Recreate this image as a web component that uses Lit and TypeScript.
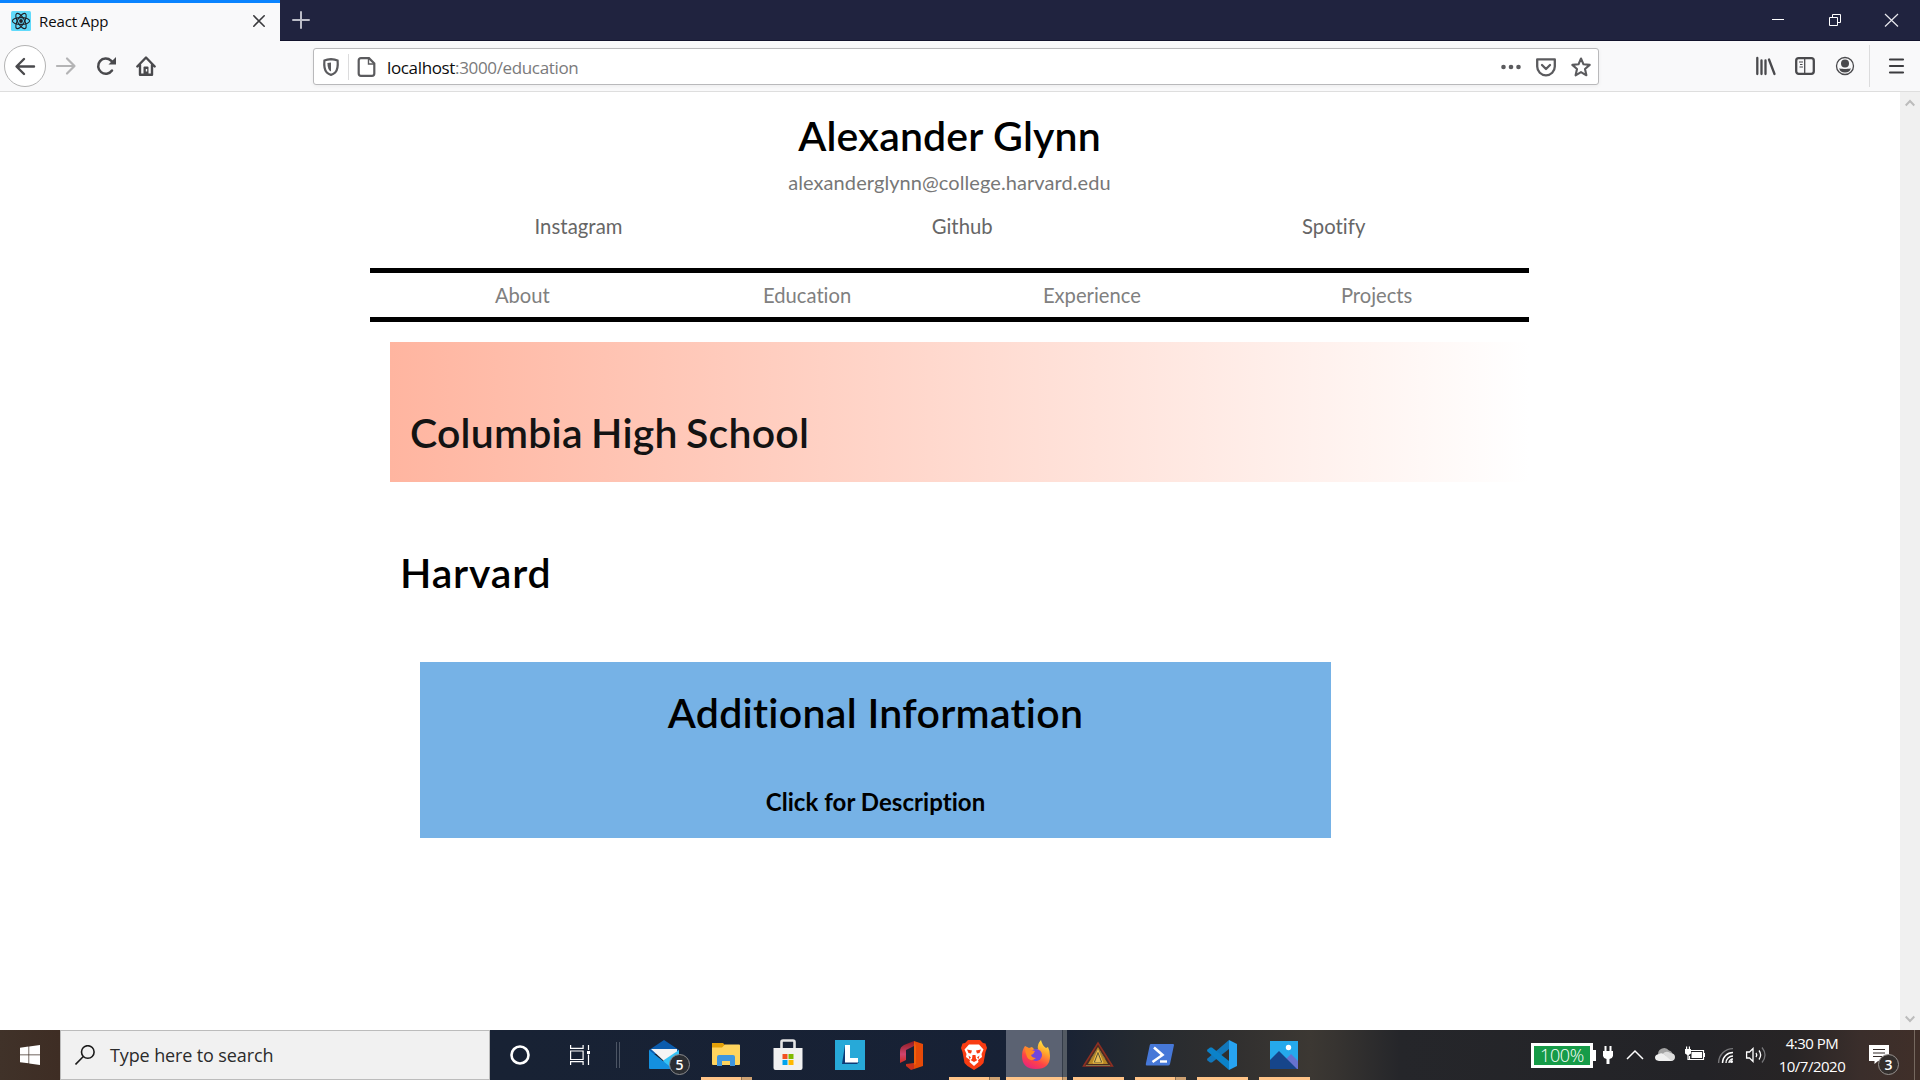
import { LitElement, html, css, svg, nothing } from "lit";
import { customElement, property } from "lit/decorators.js";

@customElement("browser-chrome")
class BrowserChrome extends LitElement {
  static styles = css`
    :host { display: block; font-family: "Open Sans", "Noto Sans", sans-serif; }
    * { box-sizing: border-box; }
    svg { display: block; flex: none; overflow: visible; }
    .tabs { display: flex; height: 41px; background: #20233f; border-bottom: 1px solid #12132c; }
    .tab { width: 280px; height: 41px; background: #f9f9fa; border-top: 3px solid #0a84ff; display: flex; align-items: center; padding: 0 15px 3px 11px; }
    .tab-title { font-size: 15px; letter-spacing: -0.1px; color: #0c0c0d; margin-left: 8px; flex: 1; line-height: 20px; }
    .plus { margin: 11px 0 0 12px; }
    .controls { margin-left: auto; display: flex; gap: 44px; padding: 14px 22px 0 0; }
    .close { margin-left: -1px; }
    .toolbar { height: 51px; background: #f9f9fa; border-bottom: 1px solid #dedede; display: flex; align-items: center; padding-right: 16px; }
    .back { width: 42px; height: 42px; border: 1px solid #b3b3b3; border-radius: 50%; background: #fff; display: flex; align-items: center; justify-content: center; margin-left: 4px; }
    .nav { display: flex; align-items: center; gap: 20px; margin-left: 10px; }
    .url { margin: 1px 0 0 157px; width: 1286px; height: 37px; border: 1px solid #b9b9bb; border-radius: 3px; background: #fff; box-shadow: 0 1px 4px rgba(0,0,0,.06); display: flex; align-items: center; padding: 0 7px 0 8px; }
    .url-sep { width: 1px; height: 26px; background: #dcdcdd; margin: 0 8px; }
    .address { font-size: 17px; line-height: 24px; letter-spacing: -0.35px; color: #0c0c0d; margin-left: 12px; flex: 1; padding-top: 2px; }
    .muted { color: #7a7a7b; }
    .actions { display: flex; gap: 15px; align-items: center; }
    .right { margin-left: auto; display: flex; align-items: center; gap: 20px; }
    .menu-sep { width: 1px; height: 42px; background: #dcdcdd; margin: 0 -1px 0 -6px; }
  `;
  render() {
    return html`
      <div class="tabs">
        <div class="tab">
          <svg width="20" height="20" viewBox="0 0 20 20"><rect width="20" height="20" rx="1.5" fill="#61dafb"/><g fill="none" stroke="#20232a" stroke-width="1.1"><ellipse cx="10" cy="10" rx="8.6" ry="3.4"/><ellipse cx="10" cy="10" rx="8.6" ry="3.4" transform="rotate(60 10 10)"/><ellipse cx="10" cy="10" rx="8.6" ry="3.4" transform="rotate(120 10 10)"/></g><circle cx="10" cy="10" r="1.9" fill="#20232a"/></svg>
          <span class="tab-title">React App</span>
          <svg width="12" height="12" viewBox="0 0 12 12"><path d="M.8.8l10.4 10.4M11.2.8L.8 11.2" stroke="#3a3a3d" stroke-width="1.6" stroke-linecap="round"/></svg>
        </div>
        <svg class="plus" width="18" height="18" viewBox="0 0 18 18"><path d="M9 1v16M1 9h16" stroke="#bcbdc8" stroke-width="2" stroke-linecap="round"/></svg>
        <div class="controls">
          <svg width="13" height="13" viewBox="0 0 13 13"><path d="M0 5.5h12" stroke="#fff"/></svg>
          <svg width="13" height="13" viewBox="0 0 13 13"><path d="M.5 3.5h8v8h-8zM3.5 3.5v-3h8v8h-3" fill="none" stroke="#fff"/></svg>
          <svg class="close" width="13" height="13" viewBox="0 0 13 13"><path d="M0 0l13 12.500M13 0L0 12.500" stroke="#e8e8ee" stroke-width="1.2"/></svg>
        </div>
      </div>
      <div class="toolbar">
        <div class="back"><svg width="20" height="20" viewBox="0 0 20 20"><path d="M19 10.500H2M9 3L1.500 10.500L9 18" fill="none" stroke="#4a4a4d" stroke-width="2.400" stroke-linecap="round" stroke-linejoin="round"/></svg></div>
        <div class="nav">
          <svg width="20" height="20" viewBox="0 0 20 20"><path d="M1 10h17M11 2.500l7.500 7.500-7.500 7.500" fill="none" stroke="#b4b4b5" stroke-width="2.200" stroke-linecap="round" stroke-linejoin="round"/></svg>
          <svg width="20" height="20" viewBox="0 0 20 20"><path d="M16 14.500A7.600 7.600 0 1 1 15 4.600L17 6.500" fill="none" stroke="#4a4a4d" stroke-width="2.500" stroke-linecap="round"/><path d="M20 1v7.500H12.500z" fill="#4a4a4d"/></svg>
          <svg width="20" height="20" viewBox="0 0 20 20"><path d="M1.300 10.500L10 1.500l8.700 9M4 9v9.700h12V9" fill="none" stroke="#4a4a4d" stroke-width="2.400" stroke-linecap="round" stroke-linejoin="round"/><path d="M7.500 19v-7.500q0-1 1-1h3q1 0 1 1V19z" fill="#4a4a4d"/><path d="M9.800 13h1.400v2.500H9.800z" fill="#f9f9fa"/></svg>
        </div>
        <div class="url">
          <svg width="18" height="18" viewBox="0 0 18 18"><path d="M9 1.200Q13 1.500 15.600 2.500q.8 8.800-2.400 12Q11.500 16.200 9 16.900Q6.500 16.200 4.800 14.500Q1.600 11.300 2.400 2.500Q5 1.500 9 1.200z" fill="none" stroke="#5b5b5e" stroke-width="2.200"/><path d="M9 4.400v9.200Q5.500 11.800 5.400 5z" fill="#5b5b5e"/></svg>
          <span class="url-sep"></span>
          <svg width="18" height="20" viewBox="0 0 18 20"><path d="M4 1.200H12L17.300 6.500V16.500q0 2.300-2.300 2.300h-11q-2.300 0-2.300-2.300v-13q0-2.300 2.300-2.300z" fill="none" stroke="#5b5b5e" stroke-width="2.200"/><path d="M11.500 1.500v5.500h5.500" fill="none" stroke="#5b5b5e" stroke-width="1.400"/></svg>
          <span class="address">localhost<span class="muted">:3000/education</span></span>
          <div class="actions">
            <svg width="20" height="20" viewBox="0 0 20 20" fill="#5b5b5e"><circle cx="2.500" cy="10" r="2.300"/><circle cx="10" cy="10" r="2.300"/><circle cx="17.500" cy="10" r="2.300"/></svg>
            <svg width="20" height="20" viewBox="0 0 20 20" fill="none" stroke="#5b5b5e" stroke-width="2.300" stroke-linecap="round" stroke-linejoin="round"><path d="M1.200 2.300h17.600v7.200a8.800 8.800 0 0 1-17.600 0z"/><path d="M6 8l4 4 4-4"/></svg>
            <svg width="20" height="20" viewBox="0 0 20 20"><path d="M10 1.500l2.500 5.800 6.200.6-4.700 4.100 1.400 6.300L10 15.100l-5.400 3.200L6 12 1.300 7.900l6.200-.6z" fill="none" stroke="#5b5b5e" stroke-width="2.100" stroke-linejoin="round"/></svg>
          </div>
        </div>
        <div class="right">
          <svg width="20" height="20" viewBox="0 0 20 20" fill="none" stroke="#4a4a4d" stroke-linecap="round"><path d="M2.300 2v16M6.500 4.500v13.500M10.500 4.500v13.500M14 3.500L19.500 18" stroke-width="2.300"/></svg>
          <svg width="20" height="20" viewBox="0 0 20 20" fill="none" stroke="#4a4a4d"><rect x="1.200" y="2.200" width="17.600" height="15.600" rx="2.500" stroke-width="2.300"/><path d="M9.700 2v16" stroke-width="1.300"/><path d="M4 6h4M5 8.500h2.500M4.500 11H8" stroke-width="1.100"/></svg>
          <svg width="20" height="20" viewBox="0 0 20 20"><circle cx="10" cy="10" r="8.500" fill="none" stroke="#4a4a4d" stroke-width="1.300"/><circle cx="10" cy="7.500" r="4" fill="#4a4a4d"/><path d="M4.200 12.200q2 .7 3.300.5 2.500.7 5 0 1.300.2 3.300-.5-.8 4.300-5.800 4.300t-5.800-4.300z" fill="#4a4a4d"/></svg>
          <span class="menu-sep"></span>
          <svg width="15" height="20" viewBox="0 0 15 20"><path d="M1 3.500h13M1 10h13M1 16.500h13" stroke="#3c3c3f" stroke-width="2.200" stroke-linecap="round"/></svg>
        </div>
      </div>`;
  }
}

@customElement("portfolio-page")
class PortfolioPage extends LitElement {
  static styles = css`
    :host { display: flex; flex: 1; min-height: 0; background: #fff; font-family: Lato, sans-serif; font-variant-ligatures: none; }
    * { box-sizing: border-box; }
    h1, h2, h3, p { margin: 0; }
    .view { flex: 1; display: flex; justify-content: center; padding-right: 1px; }
    .content { width: 1159px; }
    h1, h2 { font-size: 41px; font-weight: 600; line-height: 48px; color: #000; letter-spacing: 0.3px; }
    h1 { text-align: center; margin-top: 20px; letter-spacing: 0.15px; }
    .email { text-align: center; font-size: 20px; line-height: 24px; letter-spacing: 0.08px; margin-top: 10px; color: #777; }
    .social { display: flex; justify-content: space-around; padding: 0 9px 0 10px; margin-top: 20px; font-size: 20.300px; line-height: 24px; letter-spacing: 0.05px; color: #666; }
    .pages { display: grid; grid-template-columns: repeat(4, 1fr); padding: 0 10px; margin-top: 30px; height: 54px; border: solid #000; border-width: 5px 0; font-size: 20.200px; line-height: 44px; text-align: center; color: #808080; }
    .school { margin: 20px 0 0 20px; height: 140px; padding: 67px 20px 0; background: linear-gradient(90deg, #ffb5a0, #ffffff); color: #131313; letter-spacing: 0.2px; word-spacing: -2px; }
    .plain { padding: 67px 30px 0; height: 140px; letter-spacing: 0.8px; }
    .info { margin: 40px 0 0 50px; width: 911px; height: 176px; background: #76b2e6; text-align: center; padding-top: 27px; }
    h3 { font-size: 24px; line-height: 30px; font-weight: 700; margin-top: 50px; letter-spacing: 0.05px; }
    .bar { width: 20px; background: #f0f0f0; display: flex; flex-direction: column; justify-content: space-between; align-items: center; padding: 7px 1px 7px 0; }
  `;
  render() {
    return html`
      <div class="view"><div class="content">
        <h1>Alexander Glynn</h1>
        <p class="email">alexanderglynn@college.harvard.edu</p>
        <div class="social"><span>Instagram</span><span>Github</span><span>Spotify</span></div>
        <div class="pages"><span>About</span><span>Education</span><span>Experience</span><span>Projects</span></div>
        <h2 class="school">Columbia High School</h2>
        <h2 class="plain">Harvard</h2>
        <div class="info"><h2>Additional Information</h2><h3>Click for Description</h3></div>
      </div></div>
      <div class="bar">
        <svg width="10" height="8" viewBox="0 0 10 8"><path d="M.7 6.500L5 2l4.300 4.500" fill="none" stroke="#bcbcbc" stroke-width="2"/></svg>
        <svg width="10" height="8" viewBox="0 0 10 8"><path d="M.7 1.500L5 6l4.300-4.500" fill="none" stroke="#bcbcbc" stroke-width="2"/></svg>
      </div>`;
  }
}

const icons = {
  mail: svg`<path d="M1 11L16 1l15 10v4H1z" fill="#0b5cad"/><path d="M3 10h26v6L16 22z" fill="#f4f4f4"/><path d="M31 11v18q0 1-1 1H12l4-9z" fill="#35c3f5"/><path d="M1 11l24 19H2q-1 0-1-1z" fill="#1490df"/>`,
  folder: svg`<path d="M2 4h11l2 2v3H2z" fill="#e3a008"/><path d="M2 8.500h10l3-3h14q1 0 1 1V25q0 1-1 1H3q-1 0-1-1z" fill="#ffd45e"/><path d="M7 27V18q0-2 2-2h14q2 0 2 2v9h-5v-5h-8v5z" fill="#3f96df"/>`,
  store: svg`<path d="M9.500 11V3q0-1.500 1.500-1.500h10q1.500 0 1.500 1.500v8" fill="none" stroke="#e5e5e5" stroke-width="2.600"/><path d="M1.500 9h29v20q0 2-2 2h-25q-2 0-2-2z" fill="#f1f1f1"/><path d="M10.500 15h5v5h-5z" fill="#f25022"/><path d="M16.500 15h5v5h-5z" fill="#7fba00"/><path d="M10.500 21h5v5h-5z" fill="#00a4ef"/><path d="M16.500 21h5v5h-5z" fill="#ffb900"/>`,
  tile: svg`<path d="M1 1h30v30H1z" fill="#27a9d8"/><path d="M11 6L8 25h15l2-2H13z" fill="#0d3a75"/><path d="M11 6h5v13h8v4.500H11z" fill="#fff"/>`,
  office: svg`<defs><linearGradient id="o" x1="0" y1="0" x2="0" y2="1"><stop offset="0" stop-color="#8b1a1f"/><stop offset=".6" stop-color="#d0446e"/><stop offset="1" stop-color="#d22a1c"/></linearGradient></defs><path d="M18 2L8 6Q4 8 4 12v12l6-3V11l8-4z" fill="url(#o)"/><path d="M18 2l9 3v22l-9 3z" fill="#e64a08"/><path d="M10 25l8-1v6l-3 1-5-4z" fill="#c9301c"/><path d="M18 2l2 5v18l-2 1z" fill="#f0600c"/>`,
  brave: svg`<path d="M10 1h12l3 3 2.500.5L29 9l-1.500 4-2 11-3 3-6.500 4-6.500-4-3-3-2-11L3 9l1.500-4.500L7 4z" fill="#f93c12"/><path d="M11 5.500h10l4.500 5-2 4.500.5 3-4 3 .5 2L16 27l-4.500-4 .5-2-4-3 .5-3-2-4.500z" fill="#fff"/><path d="M9 10.500l5 1-1 3-2.500-.5zM23 10.500l-5 1 1 3 2.500-.5zM14.500 16h3l.5 4 1.500 1-3.500 2-3.500-2 1.500-1zM10.500 16.500l2.500 2-1.500 1.500zM21.500 16.500l-2.500 2 1.500 1.500z" fill="#f93c12"/>`,
  firefox: svg`<defs><linearGradient id="f" x1=".8" y1="0" x2=".3" y2="1"><stop offset="0" stop-color="#fff04a"/><stop offset=".35" stop-color="#ffa52b"/><stop offset=".7" stop-color="#ff4545"/><stop offset="1" stop-color="#e8247c"/></linearGradient></defs><path d="M5 7l4 2 3-1 3 3 3-1q-1-5 3-9 1 5 5 8l2-1q2 4 2 9 0 13-14 13T2 17q0-6 3-10z" fill="url(#f)"/><circle cx="16" cy="16" r="6" fill="#7246dc"/><path d="M5 9q5-1 6 2l4 1q-1 3-4 4 1 3 5 3-6 5-9-1-2-5-2-9z" fill="#ff8a24"/>`,
  triangle: svg`<path d="M16 4L1.500 27h29z" fill="#4a2b22" stroke="#8e2f22" stroke-width="1.500"/><path d="M16 8L6 25h20z" fill="#b88724"/><path d="M16 11L11 24h10z" fill="#5e5537" stroke="#efc04d"/><path d="M16 15l-3 8h6z" fill="#e9bf58"/><path d="M4 26.500h24M9 20l6-9M23 20l-6-9" stroke="#85764a"/>`,
  powershell: svg`<path d="M7 5h22q1 0 1 1l-4 19q-.4 1.500-2 1.500H3q-1.500 0-1.200-1.500l4-19q.2-1 1.200-1z" fill="#4678d8"/><path d="M10 8.500l8.500 7.500L8.500 23" fill="none" stroke="#fff" stroke-width="2.600"/><path d="M16 22.500h7" stroke="#fff" stroke-width="2.400"/>`,
  code: svg`<path d="M23 1v9L6 23.500H4L1.500 21.500q-1-1 0-2z" fill="#1277bb"/><path d="M1.500 12.500q-1-1 0-2L4 8.500h2L23 22v9z" fill="#0b82c9"/><path d="M23 1l8 4v22l-8 4z" fill="#27a3f2"/>`,
  photos: svg`<path d="M2 2h28v28H2z" fill="#25a9ec"/><path d="M30 22L23 15 13 25l8 5h9z" fill="#6672cf"/><path d="M2 21l9-9 18 18H2z" fill="#16458a"/><circle cx="20.500" cy="8.500" r="2.700" fill="#fff"/>`,
};

@customElement("task-item")
class TaskItem extends LitElement {
  @property() name: keyof typeof icons = "mail";
  @property() open = "";
  @property({ type: Number }) badge = 0;
  static styles = css`
    :host { display: block; width: 62px; height: 50px; }
    .cell { box-sizing: border-box; position: relative; display: flex; flex-direction: column; width: 61px; height: 50px; align-items: center; padding: 9px 1px 0 0; }
    .cell.active { background: linear-gradient(90deg, #5b6272 56px, #343c49 56px 57px, #535a63 57px); }
    svg { display: block; flex: none; }
    .line { position: absolute; left: 5px; bottom: 0; width: 51px; height: 3px; background: #ffc488; }
    .line.multi { background: linear-gradient(90deg, #ffc488 40px, #8d7153 40px 41px, #cda172 41px); }
    .line.active { left: 0; width: 61px; background: linear-gradient(90deg, #ffc488 56px, #8d7153 56px 57px, #cda172 57px); }
    .badge { position: absolute; left: 35px; top: 24px; width: 21px; height: 21px; box-sizing: border-box; border: 1px solid #8b8b8d; border-radius: 50%; background: #2b2e33; color: #fff; text-align: center; font: 600 14px/19px "Open Sans", sans-serif; }
  `;
  render() {
    return html`<div class="cell ${this.open}">
      <svg width="32" height="32" viewBox="0 0 32 32">${icons[this.name]}</svg>
      ${this.open ? html`<div class="line ${this.open}"></div>` : nothing}
      ${this.badge ? html`<div class="badge">${this.badge}</div>` : nothing}
    </div>`;
  }
}

@customElement("task-bar")
class TaskBar extends LitElement {
  static styles = css`
    :host { display: flex; height: 50px; color: #fff; font-family: "Open Sans", "Noto Sans", sans-serif;
      background: linear-gradient(90deg, #403229 0, #3e2d24 60px, #182234 490px, #172135 1050px, #252a30 1140px, #302f2f 1230px, #3c3833 1310px, #373431 1335px, #25262a 1400px, #232327 1700px, #272425 1790px, #3a2e2b 1860px, #402f29 1920px); }
    * { box-sizing: border-box; }
    svg { display: block; flex: none; }
    .start { width: 60px; padding: 15px 0 0 20px; }
    .search { width: 430px; background: #f1f1f1; border: 1px solid #bcbcbc; display: flex; align-items: center; padding-left: 14px; gap: 15px; color: #2b2b2b; font-size: 18px; letter-spacing: -0.12px; line-height: 24px; }
    .tools { width: 144px; display: flex; align-items: center; padding-left: 20px; gap: 40px; }
    .grip { width: 4px; height: 26px; border: solid #4c5564; border-width: 0 1px; margin-left: -14px; }
    .apps { display: flex; }
    .tray { margin-left: auto; display: flex; align-items: center; }
    .battery { display: flex; align-items: center; }
    .charge { width: 62px; height: 25px; border: 3px solid #fff; background: #169b48; font-size: 18px; letter-spacing: -0.4px; line-height: 18px; font-weight: 300; text-align: center; }
    .nub { width: 3px; height: 11px; background: #fff; margin-right: 6px; }
    .clock { width: 82px; margin-left: 5px; text-align: center; font-size: 15px; line-height: 23px; letter-spacing: -0.5px; }
    .notice { position: relative; margin-left: 16px; width: 40px; height: 50px; padding-top: 14px; margin-right: 5px; }
    .count { position: absolute; left: 9px; top: 24px; width: 21px; height: 21px; border: 1px solid #97928f; border-radius: 50%; background: #332e2c; text-align: center; font-size: 14px; font-weight: 600; line-height: 19px; }
    .edge { width: 1px; height: 50px; background: #75685f; margin-right: 5px; }
  `;
  render() {
    return html`
      <div class="start"><svg width="20" height="20" viewBox="0 0 20 20" fill="#fff"><path d="M0 2.800L8.500 1.600v7.900H0zM9.200 1.500L20 0v9.500H9.200zM0 10.300h8.500v7.900L0 17.200zM9.200 10.300H20V20L9.200 18.400z"/></svg></div>
      <div class="search">
        <svg width="20" height="20" viewBox="0 0 20 20" fill="none" stroke="#1b1b1b" stroke-width="1.600"><circle cx="12.800" cy="7" r="6.300"/><path d="M8.300 11.500L.5 19.500"/></svg>
        <span>Type here to search</span>
      </div>
      <div class="tools">
        <svg width="20" height="20" viewBox="0 0 20 20"><circle cx="10" cy="10" r="8.500" fill="none" stroke="#fff" stroke-width="2.600"/></svg>
        <svg width="20" height="20" viewBox="0 0 20 20" fill="none" stroke="#fff" stroke-width="1.200"><path d="M.6 0v3.400h12.500V0M.6 6h12.500v8.500H.6zM.6 20v-3.400h12.500V20M18.500 0v5M18.500 9.500V20"/><path d="M17 6h3v3h-3z" fill="#fff" stroke="none"/></svg>
        <span class="grip"></span>
      </div>
      <div class="apps">
        <task-item name="mail" badge="5"></task-item>
        <task-item name="folder" open="multi"></task-item>
        <task-item name="store"></task-item>
        <task-item name="tile"></task-item>
        <task-item name="office"></task-item>
        <task-item name="brave" open="multi"></task-item>
        <task-item name="firefox" open="active"></task-item>
        <task-item name="triangle" open="single"></task-item>
        <task-item name="powershell" open="multi"></task-item>
        <task-item name="code" open="single"></task-item>
        <task-item name="photos" open="single"></task-item>
      </div>
      <div class="tray">
        <div class="battery"><div class="charge">100%</div><span class="nub"></span></div>
        <svg width="12" height="20" viewBox="0 0 12 20"><path d="M2.500 1h2v5h3V1h2v5H11v5q-.5 2.500-3.500 3v5h-3v-5Q1.500 13.500 1 11V6h1.500z" fill="#fff"/></svg>
        <svg width="41" height="20" viewBox="0 0 41 20"><path d="M13 14l8-8 8 8" fill="none" stroke="#fff" stroke-width="1.500"/></svg>
        <svg width="20" height="20" viewBox="0 0 20 20"><path d="M3.500 11A6 6 0 0 1 14 5.500q3 .5 3.500 4z" fill="#a3a3a3"/><path d="M4 16q-4-.5-4-3.500T4 9q2-1.500 4.500 0L18 14.500q-.5 1.500-2 1.500z" fill="#f0f0f0"/><path d="M8 8.500q3-3 7.500-.5 4.500.5 4.500 4T16.500 16z" fill="#dcdcdc"/></svg>
        <svg width="30" height="20" viewBox="0 0 30 20"><path d="M15 5.500h13.500v9H14.500V11" fill="none" stroke="#fff" stroke-width="1.200"/><path d="M16.500 7H27v6H16.500zM29 8h1.500v4H29zM10 4h6v4.500l-3 2-3-2zM11 1.500h1.200V4H11zM13.800 1.500H15V4h-1.200z" fill="#fff"/><path d="M13 10v4.500h2" fill="none" stroke="#fff" stroke-width="1.200"/></svg>
        <svg width="30" height="20" viewBox="0 0 30 20" fill="none" stroke-width="1.400"><path d="M13.600 18A14.400 14.400 0 0 1 28 3.600" stroke="#77777a"/><path d="M17.500 18A10.500 10.500 0 0 1 28 7.500M21 18a7 7 0 0 1 7-7M24 18a4 4 0 0 1 4-4" stroke="#fff"/><circle cx="26.500" cy="16.500" r="1.500" fill="#fff"/></svg>
        <svg width="31" height="20" viewBox="0 0 31 20" fill="none" stroke="#fff" stroke-width="1.300"><path d="M11.600 7h2.900L18 3.500v13L14.500 13h-2.900z"/><path d="M21 8q1.500 2 0 4M24 5.500q3.300 4.500 0 9"/><path d="M27 2.500q6 7.500 0 15" stroke="#77777a"/></svg>
        <div class="clock"><div>4:30 PM</div><div>10/7/2020</div></div>
        <div class="notice">
          <svg width="20" height="21" viewBox="0 0 20 21"><path d="M0 1h20v16H9l-3.500 3V17H0z" fill="#fff"/><path d="M4 5.500h12M4 9h12M4 12.500h9" stroke="#332a28" stroke-width="1.200"/></svg>
          <span class="count">3</span>
        </div>
        <span class="edge"></span>
      </div>`;
  }
}

@customElement("app-root")
class AppRoot extends LitElement {
  static styles = css`:host { display: flex; flex-direction: column; width: 1920px; height: 1080px; overflow: hidden; }`;
  render() {
    return html`<browser-chrome></browser-chrome><portfolio-page></portfolio-page><task-bar></task-bar>`;
  }
}
